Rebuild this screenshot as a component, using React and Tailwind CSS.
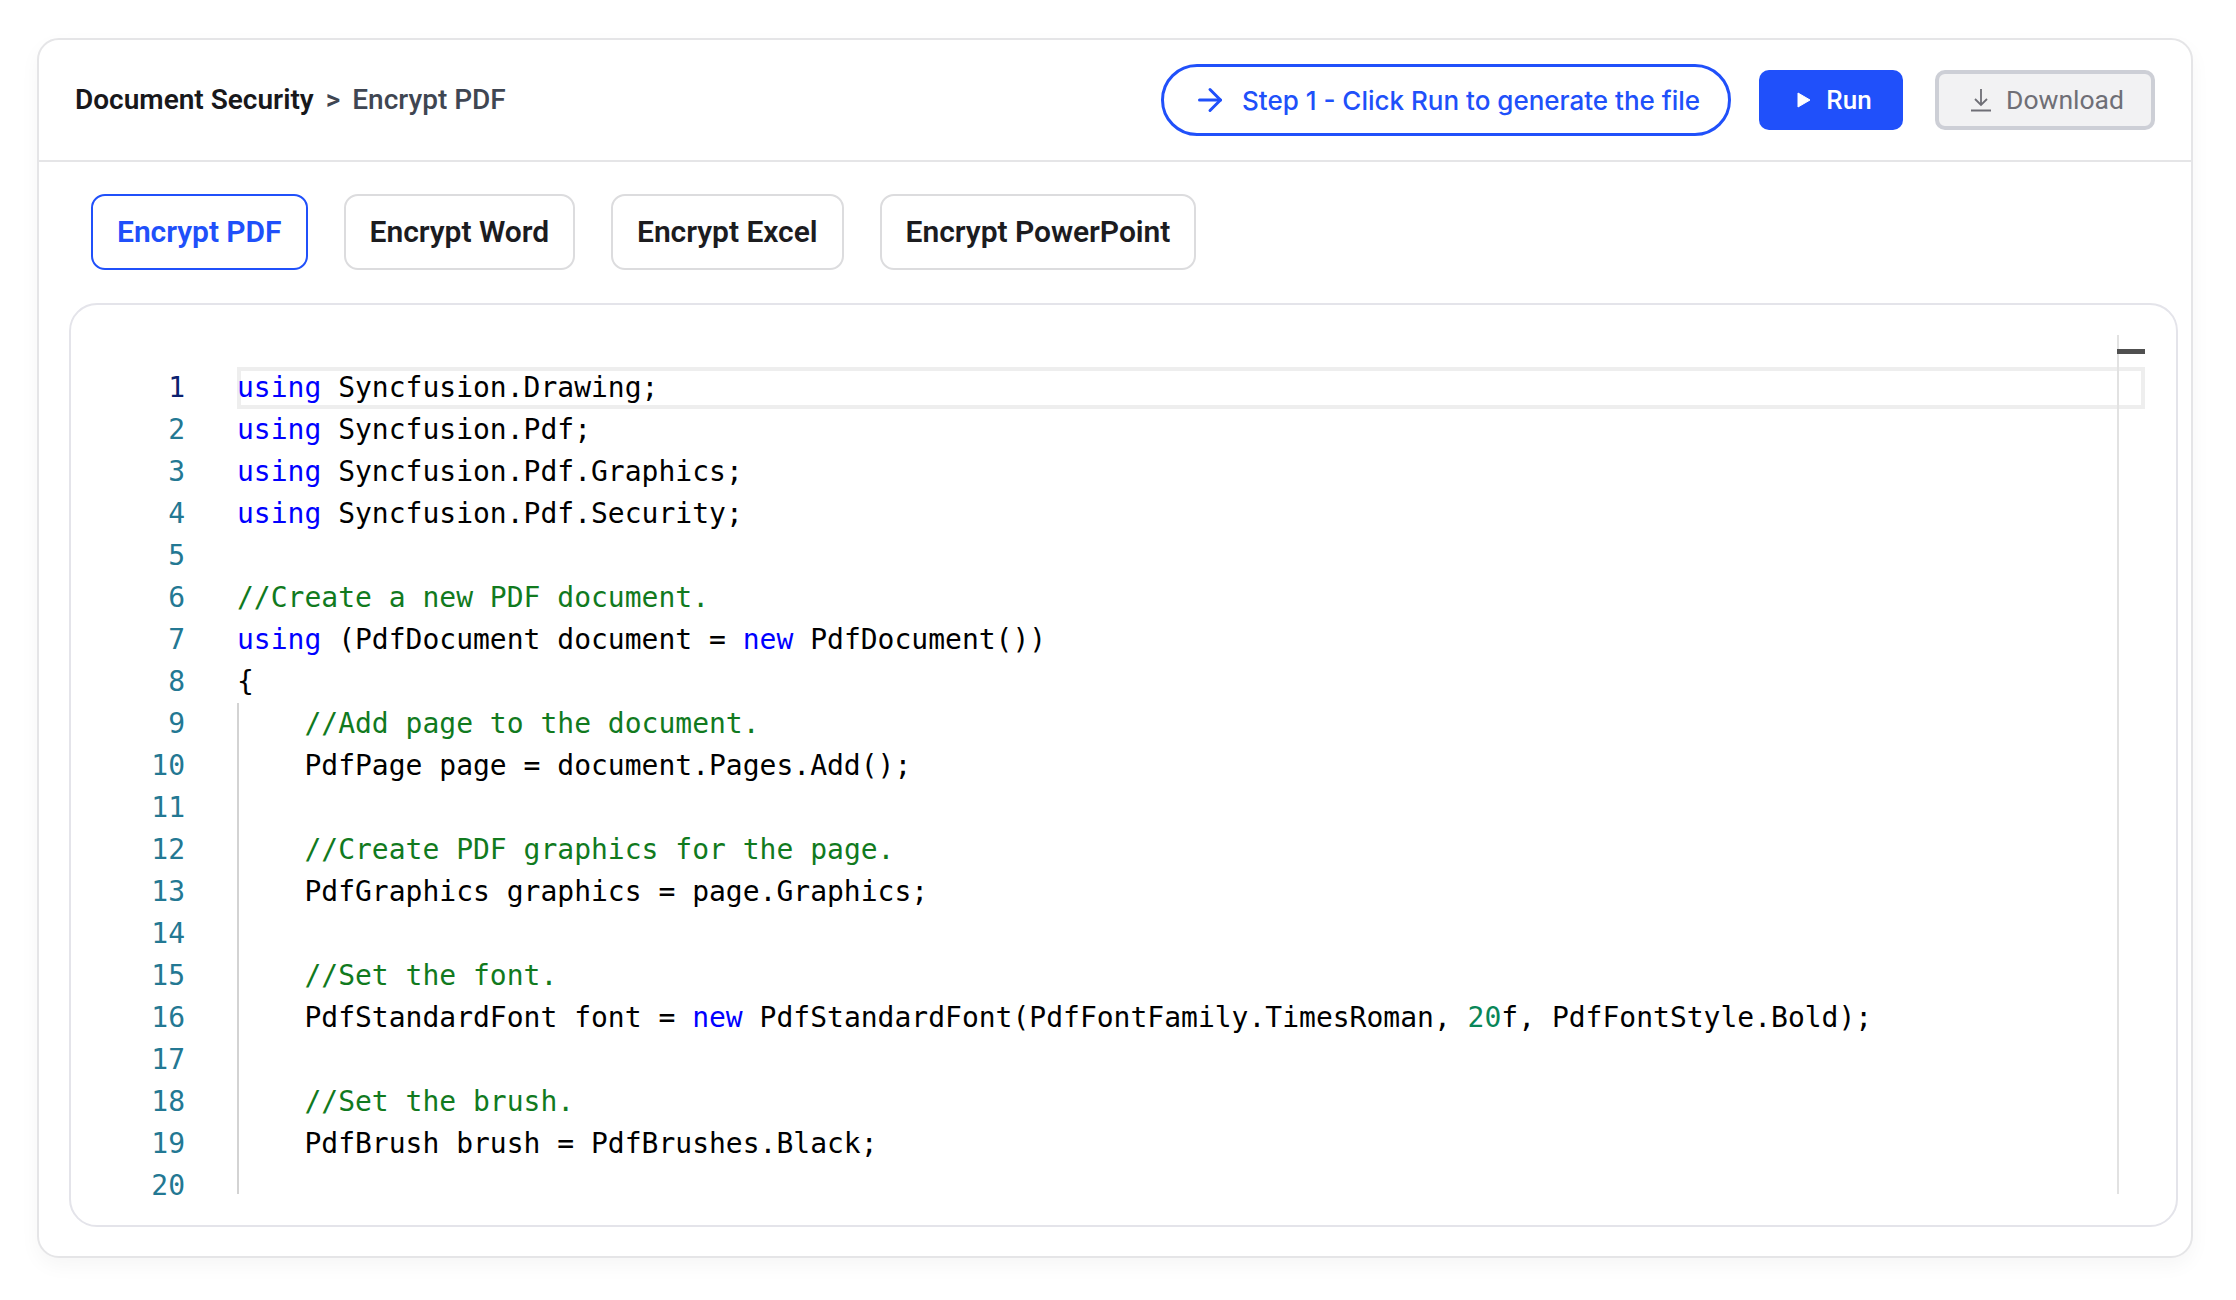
import { ArrowRight } from 'lucide-react';

const K = ({ children }) => <span className="text-[#0000ff]">{children}</span>;
const C = ({ children }) => <span className="text-[#117a1e]">{children}</span>;
const N = ({ children }) => <span className="text-[#098658]">{children}</span>;

const lines = [
  <><K>using</K> Syncfusion.Drawing;</>,
  <><K>using</K> Syncfusion.Pdf;</>,
  <><K>using</K> Syncfusion.Pdf.Graphics;</>,
  <><K>using</K> Syncfusion.Pdf.Security;</>,
  '',
  <C>//Create a new PDF document.</C>,
  <><K>using</K> (PdfDocument document = <K>new</K> PdfDocument())</>,
  '{',
  <>    <C>//Add page to the document.</C></>,
  '    PdfPage page = document.Pages.Add();',
  '',
  <>    <C>//Create PDF graphics for the page.</C></>,
  '    PdfGraphics graphics = page.Graphics;',
  '',
  <>    <C>//Set the font.</C></>,
  <>    PdfStandardFont font = <K>new</K> PdfStandardFont(PdfFontFamily.TimesRoman, <N>20</N>f, PdfFontStyle.Bold);</>,
  '',
  <>    <C>//Set the brush.</C></>,
  '    PdfBrush brush = PdfBrushes.Black;',
  '',
];

const tabs = ['Encrypt PDF', 'Encrypt Word', 'Encrypt Excel', 'Encrypt PowerPoint'];

export default function App() {
  return (
    <div className="min-h-[1300px] bg-white pl-[37px] pt-[38px] font-['Inter',sans-serif]">
      <div className="h-[1220px] w-[2156px] rounded-[22px] border-2 border-[#e5e5e7] bg-white shadow-[0_8px_20px_rgba(0,0,0,0.04)]">
        <div className="flex h-[122px] items-center justify-between border-b-2 border-[#e5e5e7] pl-[36px] pr-[36px]">
          <div className="flex items-center font-['Roboto',sans-serif] text-[28px]">
            <span className="font-semibold text-[#18181b]">Document Security</span>
            <span className="mx-[12px] font-semibold text-[#3f4652]">&gt;</span>
            <span className="font-medium text-[#3f4652]">Encrypt PDF</span>
          </div>
          <div className="flex items-center">
            <div className="flex h-[72px] w-[570px] items-center rounded-full border-[3px] border-[#2050fa] pl-[28px] text-[26px] font-medium text-[#2050fa]">
              <ArrowRight className="mr-[14px] h-[36px] w-[36px]" strokeWidth={2} />
              Step 1 - Click Run to generate the file
            </div>
            <div className="ml-[28px] flex h-[60px] w-[144px] items-center justify-center rounded-[10px] bg-[#2050fa] pl-[7px] font-['Roboto',sans-serif] text-[26px] font-medium text-white">
              <svg viewBox="0 0 14 16" className="mr-[15px] h-[16px] w-[14px]" fill="currentColor">
                <path d="M1 1 L13 8 L1 15 Z" stroke="currentColor" strokeLinejoin="round" />
              </svg>
              Run
            </div>
            <div className="ml-[32px] flex h-[60px] w-[220px] items-center justify-center rounded-[10px] border-[4px] border-[#cdcfd6] bg-[#f2f2f3] pl-[5px] font-['Roboto',sans-serif] text-[26.5px] text-[#6f6f76]">
              <svg viewBox="0 0 20 24" className="mr-[15px] h-[24px] w-[20px]" fill="none" stroke="currentColor" strokeWidth="1.8">
                <path d="M10 1V17M4 11L10 17L16 11M0 22.5H20" />
              </svg>
              Download
            </div>
          </div>
        </div>

        <div className="flex gap-[36px] pl-[52px] pt-[32px]">
          {tabs.map((t, i) => (
            <div
              key={t}
              className={
                i === 0
                  ? "flex h-[76px] items-center rounded-[14px] border-2 border-[#2050fa] px-[24px] pb-[2px] font-['Roboto',sans-serif] text-[30px] font-semibold tracking-[-0.04px] text-[#2050fa]"
                  : "flex h-[76px] items-center rounded-[14px] border-2 border-[#dcdcde] px-[24px] pb-[2px] font-['Roboto',sans-serif] text-[30px] font-semibold tracking-[-0.04px] text-[#1c1c1f]"
              }
            >
              {t}
            </div>
          ))}
        </div>

        <div className="ml-[30px] mt-[33px] h-[924px] w-[2109px] rounded-[28px] border-2 border-[#e4e4ea] pl-px pt-[30px]">
          <div className="relative h-[859px] font-['DejaVu_Sans_Mono',monospace] text-[28px] leading-[42px]">
            <div className="absolute left-[165px] top-[32px] h-[42px] w-[1908px] border-4 border-[#eeeeee]" />
            <div className="absolute left-[165px] top-[368px] h-[491px] w-[2px] bg-[#d3d3d3]" />
            <div className="absolute left-[2045px] top-0 h-[859px] w-[2px] bg-[#e2e2e2]" />
            <div className="absolute left-[2045px] top-[14px] h-[5px] w-[28px] bg-[#505050]" />
            <div className="relative pt-[32px]">
              {lines.map((l, i) => (
                <div key={i} className="flex h-[42px]">
                  <div className={i === 0 ? 'w-[113px] shrink-0 text-right text-[#0b216f]' : 'w-[113px] shrink-0 text-right text-[#237893]'}>
                    {i + 1}
                  </div>
                  <div className="ml-[52px] whitespace-pre text-black">{l}</div>
                </div>
              ))}
            </div>
          </div>
        </div>
      </div>
    </div>
  );
}
